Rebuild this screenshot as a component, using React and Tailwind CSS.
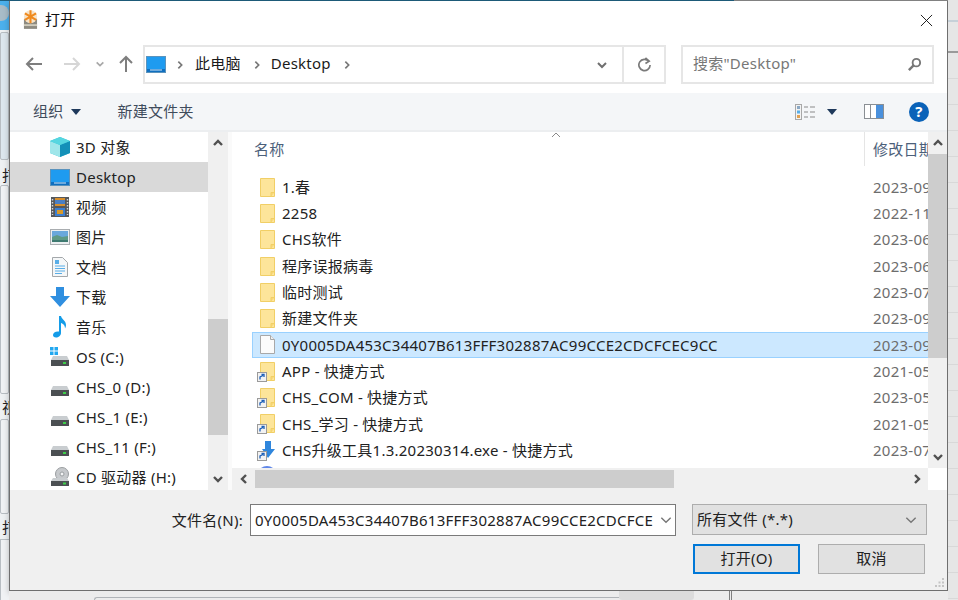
import React from "react";

const navItems = [
  { name: "3D 对象", icon: "cube" },
  { name: "Desktop", icon: "desktop", active: true },
  { name: "视频", icon: "film" },
  { name: "图片", icon: "picture" },
  { name: "文档", icon: "doc" },
  { name: "下载", icon: "download" },
  { name: "音乐", icon: "music" },
  { name: "OS (C:)", icon: "os" },
  { name: "CHS_0 (D:)", icon: "drive" },
  { name: "CHS_1 (E:)", icon: "drive" },
  { name: "CHS_11 (F:)", icon: "drive" },
  { name: "CD 驱动器 (H:)", icon: "cd" },
];

const files = [
  { name: "1.春", date: "2023-09", icon: "folder" },
  { name: "2258", date: "2022-11", icon: "folder" },
  { name: "CHS软件", date: "2023-06", icon: "folder" },
  { name: "程序误报病毒", date: "2023-06", icon: "folder" },
  { name: "临时测试", date: "2023-07", icon: "folder" },
  { name: "新建文件夹", date: "2023-09", icon: "folder" },
  { name: "0Y0005DA453C34407B613FFF302887AC99CCE2CDCFCEC9CC", date: "2023-09", icon: "file", selected: true },
  { name: "APP - 快捷方式", date: "2021-05", icon: "folderLink" },
  { name: "CHS_COM - 快捷方式", date: "2023-05", icon: "folderLink" },
  { name: "CHS_学习 - 快捷方式", date: "2021-05", icon: "folderLink" },
  { name: "CHS升级工具1.3.20230314.exe - 快捷方式", date: "2023-07", icon: "exeLink" },
  { name: "", date: "", icon: "globe" },
];

function DesktopIcon({ className }) {
  return (
    <svg viewBox="0 0 20 17" className={className}>
      <rect x="0.5" y="0.5" width="19" height="16" fill="#1e9bf0" stroke="#5a93bd" />
      <rect x="1" y="1" width="18" height="12" fill="#1e9bf0" />
      <rect x="1" y="13" width="18" height="3" fill="#0f6fc0" />
      <rect x="4" y="13.5" width="12" height="1" fill="#cfe8fa" />
    </svg>
  );
}

function Drive({ windows }) {
  return (
    <svg viewBox="0 0 20 20" className="w-5 h-5">
      {windows && (
        <g fill="#22a8f0">
          <rect x="0" y="0" width="3.5" height="3.5" />
          <rect x="4.5" y="0" width="3.5" height="3.5" />
          <rect x="0" y="4.5" width="3.5" height="3.5" />
          <rect x="4.5" y="4.5" width="3.5" height="3.5" />
        </g>
      )}
      <path d="M3 9h14l2 4H1z" fill="#c9cdd0" />
      <rect x="1" y="13" width="18" height="6" fill="#4b4f52" />
      <rect x="13" y="15" width="3" height="2" fill="#3ecf4a" />
    </svg>
  );
}

function NavIcon({ type }) {
  if (type === "desktop") return <DesktopIcon className="w-5 h-[17px]" />;
  if (type === "cube")
    return (
      <svg viewBox="0 0 20 20" className="w-5 h-5">
        <path d="M10 0l10 4v12l-10 4-10-4V4z" fill="#35c4d6" />
        <path d="M10 8l10-4v12l-10 4z" fill="#1490b8" />
        <path d="M10 8L0 4v12l10 4z" fill="#9fe6ea" />
        <path d="M10 0l10 4-10 4L0 4z" fill="#56d6e0" />
      </svg>
    );
  if (type === "film")
    return (
      <svg viewBox="0 0 18 20" className="w-[18px] h-5">
        <rect width="18" height="20" fill="#55585c" />
        <rect x="4" y="1" width="10" height="8" fill="#d88f2c" />
        <rect x="4" y="3" width="10" height="4" fill="#4a7fc4" />
        <rect x="4" y="11" width="10" height="8" fill="#3d7fd0" />
        <rect x="6" y="13" width="6" height="4" fill="#d89a2c" />
        <path d="M1.5 2v16M16.5 2v16" stroke="#d8d8d8" strokeWidth="1.4" strokeDasharray="1.4 1.6" />
      </svg>
    );
  if (type === "picture")
    return (
      <svg viewBox="0 0 20 16" className="w-5 h-4">
        <rect x="0.5" y="0.5" width="19" height="15" fill="#eceff1" stroke="#a9adb0" />
        <rect x="2" y="2" width="16" height="6" fill="#6aa8dc" />
        <path d="M2 8l5-2 5 2 6-1v6H2z" fill="#5f9a86" />
        <rect x="2" y="11" width="16" height="2" fill="#3e7a70" />
      </svg>
    );
  if (type === "doc")
    return (
      <svg viewBox="0 0 16 20" className="w-4 h-5">
        <path d="M0.5 0.5h10l5 5v14H0.5z" fill="#f5f7f8" stroke="#a4a8ab" />
        <path d="M3 3h4v4H3z" fill="#58aee8" />
        <path d="M3 9h10M3 11.5h10M3 14h10M3 16.5h7" stroke="#58aee8" />
      </svg>
    );
  if (type === "download")
    return (
      <svg viewBox="0 0 20 20" className="w-5 h-5">
        <path d="M6 0h8v9h6L10 20 0 9h6z" fill="#2f8fe0" />
      </svg>
    );
  if (type === "music")
    return (
      <svg viewBox="0 0 16 22" className="w-4 h-[22px]">
        <path d="M7 0h2c.3 3 5 4.500 5 9 0 1.500-.5 2.500-1 3.500.2-3-2-5-4-5.500V17c0 2.500-2.500 4.500-5 4.500C2 21.500 1 20.500 1 19c0-2 2.500-4 6-3.500z" fill="#149ce8" />
      </svg>
    );
  if (type === "os") return <Drive windows />;
  if (type === "drive") return <Drive />;
  if (type === "cd")
    return (
      <svg viewBox="0 0 20 20" className="w-5 h-5">
        <circle cx="12" cy="7" r="6.500" fill="#c6c9cc" stroke="#9a9ea1" />
        <circle cx="12" cy="7" r="2" fill="#f3f4f5" stroke="#9a9ea1" />
        <path d="M3 11h14l2 3H1z" fill="#c9cdd0" />
        <rect x="1" y="14" width="18" height="5" fill="#4b4f52" />
        <rect x="13" y="15.500" width="3" height="2" fill="#3ecf4a" />
      </svg>
    );
  return null;
}

function ShortcutBadge() {
  return (
    <svg viewBox="0 0 10 10" className="absolute left-[-3px] bottom-[-1px] w-[10px] h-[10px]">
      <rect x="0.5" y="0.5" width="9" height="9" fill="#f2f2f2" stroke="#9a9a9a" />
      <path d="M3 7.500V5l3-1.500M4.500 2.500H7V5" fill="none" stroke="#1c5fb8" strokeWidth="1.300" />
    </svg>
  );
}

function FileIcon({ type }) {
  if (type === "file")
    return (
      <svg viewBox="0 0 15 19" className="w-[15px] h-[19px]">
        <path d="M0.500 0.500h10l4 4v14H0.500z" fill="#fbfbfb" stroke="#a8a8a8" />
        <path d="M10.500 0.500v4h4" fill="#efefef" stroke="#a8a8a8" />
      </svg>
    );
  if (type === "globe")
    return (
      <svg viewBox="0 0 20 20" className="w-5 h-5 shrink-0">
        <circle cx="10" cy="10" r="10" fill="#5f86e8" />
      </svg>
    );
  if (type === "exeLink")
    return (
      <div className="relative w-[15px] h-[19px]">
        <svg viewBox="0 0 15 19" className="w-[15px] h-[19px]">
          <path d="M5 0h6v8h4l-7 9-6-9h3z" fill="#2f86dc" />
        </svg>
        <ShortcutBadge />
      </div>
    );
  return (
    <div className="relative w-[15px] h-[19px]">
      <svg viewBox="0 0 15 19" className="w-[15px] h-[19px]">
        <path d="M0.500 0.500h14v18H0.500z" fill="#fde59a" stroke="#f1cf66" />
        <path d="M11 18.500v-4h3.500" fill="#f8d878" stroke="#f1cf66" />
      </svg>
      {type === "folderLink" && <ShortcutBadge />}
    </div>
  );
}

function Chevron({ dir = "down", className = "", color = "#555", width = 2 }) {
  const paths = {
    up: "M2 8l4-4 4 4",
    down: "M2 4l4 4 4-4",
    left: "M8 2L4 6l4 4",
    right: "M4 2l4 4-4 4",
  };
  return (
    <svg viewBox="0 0 12 12" className={className}>
      <path d={paths[dir]} fill="none" stroke={color} strokeWidth={width} />
    </svg>
  );
}

function LeftStrip() {
  return (
    <div className="w-[9px] h-[600px] shrink-0 overflow-hidden flex flex-col bg-[#eef1f3] text-[15px] leading-none text-[#222]">
      <div className="h-[30px] shrink-0 bg-[#4cb0ec] border-t border-[#1f5f7f]">
        <div className="w-[9px] h-4 mt-[4px] rounded-r-full bg-[#a9bcc8]"></div>
      </div>
      <div className="h-[128px] shrink-0 mt-[2px] bg-[#dde7ee] border border-[#b8bec3] rounded-[2px]"></div>
      <div className="h-[25px] shrink-0 pl-[2px] pt-[8px] whitespace-nowrap">打</div>
      <div className="h-[209px] shrink-0 bg-[#f0f2f4] border border-[#b8bec3] rounded-[2px]"></div>
      <div className="h-[25px] shrink-0 pl-[2px] pt-[6px] whitespace-nowrap">视</div>
      <div className="h-[95px] shrink-0 bg-[#f0f2f4] border border-[#b8bec3] rounded-[2px]"></div>
      <div className="h-[25px] shrink-0 pl-[2px] pt-[6px] whitespace-nowrap">打</div>
      <div className="flex-1 bg-[#f0f2f4] border-l border-t border-[#b8bec3]"></div>
    </div>
  );
}

function RightStrip() {
  return (
    <div className="w-[10px] h-[600px] shrink-0 flex flex-col bg-[#e6e6e6]">
      <div className="h-[22px] shrink-0 border-b-2 border-[#c6d0d8]"></div>
      <div className="h-[31px] shrink-0 border-b-2 border-[#9a9a9a]"></div>
      {Array.from({ length: 21 }).map((_, i) => (
        <div key={i} className="h-[26px] shrink-0 border-b border-[#d8d8d8]"></div>
      ))}
    </div>
  );
}

function TitleBar() {
  return (
    <div className="h-[38px] shrink-0 flex items-center pl-[13px] pr-[14px]">
      <svg viewBox="0 0 16 20" className="w-[15px] h-[19px] mb-[2px]">
        <path d="M1 9h14v11H1z" fill="#8d8a80" />
        <path d="M1 15h14v2H1z" fill="#cfcabb" />
        <circle cx="8" cy="7" r="7" fill="#f6e3c8" />
        <g stroke="#f08a1e" strokeWidth="2.200">
          <path d="M8 0v14M2 3.500l12 7M14 3.500l-12 7" />
        </g>
      </svg>
      <span className="ml-[7px] mb-[2px] text-[15px] text-[#111]">打开</span>
      <svg viewBox="0 0 14 14" className="ml-auto w-[13px] h-[13px]">
        <path d="M1 1l12 12M13 1L1 13" stroke="#111" strokeWidth="1" />
      </svg>
    </div>
  );
}

function AddressRow() {
  return (
    <div className="h-[54px] shrink-0 flex items-start pt-[6px]">
      <div className="w-[133px] h-[38px] shrink-0 flex items-center pl-[15px]">
        <svg viewBox="0 0 18 16" className="w-[18px] h-4">
          <path d="M17 8H2M8 2L2 8l6 6" fill="none" stroke="#7e7e7e" strokeWidth="2" />
        </svg>
        <svg viewBox="0 0 18 16" className="w-[18px] h-4 ml-[20px]">
          <path d="M1 8h15M10 2l6 6-6 6" fill="none" stroke="#d6d6d6" strokeWidth="2" />
        </svg>
        <Chevron className="w-[10px] h-[10px] ml-[14px]" color="#a8a8a8" />
        <svg viewBox="0 0 16 18" className="w-4 h-[18px] ml-[13px]">
          <path d="M8 17V2M2 8l6-6 6 6" fill="none" stroke="#7e7e7e" strokeWidth="2" />
        </svg>
      </div>
      <div className="w-[523px] h-[39px] shrink-0 flex items-center border-2 border-[#e6e6e6] bg-white text-[15px] text-[#1a1a1a]">
        <DesktopIcon className="w-5 h-[17px] ml-[1px]" />
        <Chevron dir="right" className="w-[10px] h-[10px] ml-[9px]" color="#777" />
        <span className="ml-[10px] mb-[2px]">此电脑</span>
        <Chevron dir="right" className="w-[10px] h-[10px] ml-[11px]" color="#777" />
        <span className="ml-[9px] mb-[2px]">Desktop</span>
        <Chevron dir="right" className="w-[10px] h-[10px] ml-[11px]" color="#777" />
        <Chevron className="w-3 h-3 ml-auto mr-[14px]" color="#6f6f6f" />
        <div className="w-[42px] h-full flex items-center justify-center border-l-2 border-[#e6e6e6]">
          <svg viewBox="0 0 16 16" className="w-[15px] h-[15px]">
            <path d="M12.500 4.500A6 6 0 1 0 14 8.500M9 1l4 3.500L9 7" fill="none" stroke="#7a7a7a" strokeWidth="1.800" />
          </svg>
        </div>
      </div>
      <div className="w-[253px] h-[39px] shrink-0 ml-[15px] flex items-center justify-between border-2 border-[#e6e6e6] bg-white pl-[10px] pr-[10px] text-[15px] text-[#777]">
        <span className="mb-[2px]">搜索"Desktop"</span>
        <svg viewBox="0 0 16 16" className="w-[15px] h-[15px]">
          <circle cx="10" cy="6" r="4" fill="none" stroke="#777" strokeWidth="2" />
          <path d="M7 9l-5 5" stroke="#777" strokeWidth="2.600" />
        </svg>
      </div>
    </div>
  );
}

function Toolbar() {
  return (
    <div className="h-[39px] shrink-0 flex items-center bg-[#f4f6f8] border-b-2 border-[#eceef0] pl-[23px] text-[15px] text-[#3f4c5c]">
      <span>组织</span>
      <svg viewBox="0 0 10 6" className="w-[10px] h-[6px] ml-[7px]">
        <path d="M0 0h10L5 6z" fill="#1e395b" />
      </svg>
      <span className="ml-[37px]">新建文件夹</span>
      <svg viewBox="0 0 20 16" className="w-5 h-4 ml-auto">
        <rect x="0.500" y="0.500" width="6" height="15" fill="#f3f3f3" stroke="#a8a8a8" />
        <rect x="2" y="2" width="3" height="3" fill="#8aa8c4" />
        <rect x="2" y="6.500" width="3" height="3" fill="#58aee8" />
        <rect x="2" y="11" width="3" height="3" fill="#e0a050" />
        <path d="M9 3h4M15 3h5M9 8h4M15 8h5M9 13h4M15 13h5" stroke="#8a8a8a" />
      </svg>
      <svg viewBox="0 0 10 6" className="w-[10px] h-[6px] ml-[12px]">
        <path d="M0 0h10L5 6z" fill="#1e395b" />
      </svg>
      <svg viewBox="0 0 20 15" className="w-5 h-[15px] ml-[27px]">
        <rect x="0.500" y="0.500" width="19" height="14" fill="#fff" stroke="#8a8f94" />
        <rect x="6" y="1" width="1" height="13" fill="#8a8f94" />
        <rect x="12" y="1" width="7" height="13" fill="#4a90dc" />
      </svg>
      <div className="w-5 h-5 ml-[25px] mr-[18px] rounded-full bg-[#0a62b8] flex items-center justify-center text-white font-bold text-[15px] leading-none">?</div>
    </div>
  );
}

function NavPane() {
  return (
    <div className="w-[198px] h-[358px] shrink-0 overflow-hidden flex flex-col bg-white text-[15px] text-[#222]">
      {navItems.map((item) => (
        <div
          key={item.name}
          className={`h-[30px] shrink-0 flex items-center ${item.active ? "bg-[#d9d9d9]" : ""}`}
        >
          <div className="w-5 ml-[40px] flex justify-center shrink-0">
            <NavIcon type={item.icon} />
          </div>
          <span className="ml-[6px] whitespace-pre">{item.name}</span>
        </div>
      ))}
    </div>
  );
}

function VScroll({ spaceTop, thumb, width }) {
  return (
    <div className={`${width} h-full shrink-0 flex flex-col bg-[#f0f0f0]`}>
      <div className="h-[22px] shrink-0 flex items-center justify-center">
        <Chevron dir="up" className="w-3 h-3" color="#505050" width={2.4} />
      </div>
      <div className={`${spaceTop} shrink-0`}></div>
      <div className={`${thumb} shrink-0 bg-[#cdcdcd]`}></div>
      <div className="flex-1"></div>
      <div className="h-[22px] shrink-0 flex items-center justify-center">
        <Chevron className="w-3 h-3" color="#505050" width={2.4} />
      </div>
    </div>
  );
}

function FileList() {
  return (
    <div className="w-[715px] h-[358px] shrink-0 flex flex-col">
      <div className="h-[336px] shrink-0 flex">
        <div className="w-[696px] shrink-0 overflow-hidden bg-white">
          <div className="h-[34px] flex text-[15px] text-[#4c607a]">
            <div className="w-[632px] shrink-0 pl-[22px] pt-[6px] relative">
              名称
              <Chevron dir="up" className="absolute left-[318px] top-[-3px] w-3 h-3" color="#8a8a8a" width={1} />
            </div>
            <div className="flex-1 border-l border-[#e5e5e5] pl-[8px] pt-[6px] whitespace-nowrap">修改日期</div>
          </div>
          <div className="pt-2 pl-[20px]">
            {files.map((f, i) => (
              <div
                key={i}
                className={`w-[700px] h-[26.3px] flex items-center pl-[6px] border text-[15px] text-[#222] ${
                  f.selected ? "bg-[#cce8ff] border-[#99d1ff]" : "border-transparent"
                }`}
              >
                <div className="w-4 shrink-0 flex justify-center">
                  <FileIcon type={f.icon} />
                </div>
                <span className="w-[591px] ml-[7px] shrink-0 whitespace-pre">{f.name}</span>
                <span className="text-[#6d6d6d]">{f.date}</span>
              </div>
            ))}
          </div>
        </div>
        <VScroll spaceTop="h-0" thumb="h-[204px]" width="w-[19px]" />
      </div>
      <div className="h-[22px] shrink-0 flex">
        <div className="w-[696px] shrink-0 flex items-center bg-[#f0f0f0]">
          <div className="w-[23px] shrink-0 flex justify-center">
            <Chevron dir="left" className="w-3 h-3" color="#505050" width={2.4} />
          </div>
          <div className="w-[419px] h-[18px] shrink-0 bg-[#cdcdcd]"></div>
          <div className="ml-auto w-[22px] flex justify-center">
            <Chevron dir="right" className="w-3 h-3" color="#505050" width={2.4} />
          </div>
        </div>
        <div className="flex-1 bg-white"></div>
      </div>
    </div>
  );
}

function BottomPanel() {
  return (
    <div className="flex-1 relative bg-[#f0f0f0] text-[15px] text-[#222]">
      <div className="flex items-start pt-[14px]">
        <span className="w-[240px] shrink-0 h-[32px] leading-[32px] text-right pr-[7px]">文件名(N):</span>
        <div className="w-[426px] h-[32px] shrink-0 flex items-center border border-[#7a7a7a] bg-white pl-[4px] overflow-hidden">
          <span className="w-[398px] shrink-0 overflow-hidden whitespace-pre">0Y0005DA453C34407B613FFF302887AC99CCE2CDCFCEC9CC</span>
          <Chevron className="w-[14px] h-[14px] ml-[6px] shrink-0" color="#777" width={1.2} />
        </div>
        <div className="w-[235px] h-[31px] shrink-0 ml-[16px] flex items-center justify-between border border-[#adadad] bg-[#e1e1e1] pl-[4px] pr-[8px]">
          <span>所有文件 (*.*)</span>
          <Chevron className="w-[14px] h-[14px]" color="#777" width={1.2} />
        </div>
      </div>
      <div className="flex mt-[8px] pl-[683px]">
        <button className="w-[107px] h-[30px] border-2 border-[#0078d7] bg-[#e1e1e1] pb-[1px]">打开(O)</button>
        <button className="w-[107px] h-[30px] ml-[18px] border border-[#adadad] bg-[#e1e1e1] pb-[1px]">取消</button>
      </div>
      <svg viewBox="0 0 11 11" className="absolute right-[2px] bottom-[2px] w-[11px] h-[11px]">
        <path d="M8 1h2v2H8zM4.500 4.500h2v2h-2zM8 4.500h2v2H8zM1 8h2v2H1zM4.500 8h2v2h-2zM8 8h2v2H8z" fill="#c4c4c4" />
      </svg>
    </div>
  );
}

function BottomStrip() {
  return (
    <div className="h-[9px] shrink-0 flex bg-[#ececec]">
      <div className="w-[85px] shrink-0"></div>
      <div className="w-[525px] shrink-0 border-l border-t border-[#b0b4b8] mt-[6px] rounded-tl-[3px]"></div>
      <div className="w-[75px] shrink-0 bg-[#dcdcdc] rounded-b-[3px]"></div>
      <div className="w-[35px] shrink-0"></div>
      <div className="w-[3px] shrink-0 border-x border-[#808080]"></div>
    </div>
  );
}

export default function App() {
  return (
    <div className="w-[958px] h-[600px] overflow-hidden flex tracking-[0.25px] font-['Noto_Sans','Noto_Sans_CJK_SC',sans-serif]">
      <LeftStrip />
      <div className="w-[939px] h-[600px] shrink-0 flex flex-col">
        <div className="h-px shrink-0 flex">
          <div className="w-[725px] shrink-0 bg-[#1f5f7f]"></div>
          <div className="flex-1 bg-[#888]"></div>
        </div>
        <div className="h-[590px] shrink-0 flex flex-col border-l border-r border-b border-[#6f6f6f] bg-white shadow-[0_2px_6px_rgba(0,0,0,0.25)]">
          <TitleBar />
          <AddressRow />
          <Toolbar />
          <div className="h-[358px] shrink-0 flex">
            <NavPane />
            <VScroll spaceTop="h-[165px]" thumb="h-[116px]" width="w-[20px]" />
            <div className="w-[4px] shrink-0 bg-[#fafafa]"></div>
            <FileList />
          </div>
          <BottomPanel />
        </div>
        <BottomStrip />
      </div>
      <RightStrip />
    </div>
  );
}
